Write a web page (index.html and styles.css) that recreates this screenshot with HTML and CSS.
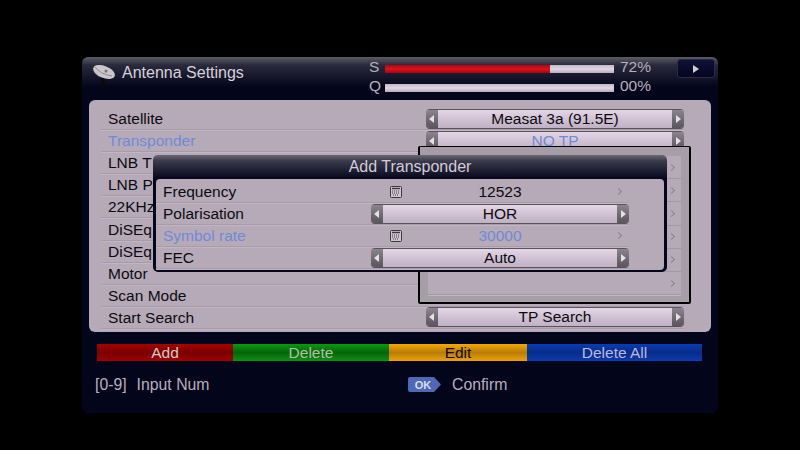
FILE: index.html
```html
<!DOCTYPE html>
<html lang="en">

<head>
    <meta charset="UTF-8">
    <title>Antenna Settings</title>
    <link rel="stylesheet" href="styles.css">
</head>

<body>
    <div class="window">
        <div class="header">
            <div class="title-box">
                <svg class="dish" width="26" height="26" viewBox="0 0 26 26">
                    <path d="M10 14 L12 22 M8 23 H15" stroke="#08080e" stroke-width="3" fill="none" />
                    <ellipse cx="12" cy="9" rx="11.5" ry="6" transform="rotate(22 12 9)" fill="#c9c5cb" />
                    <path d="M3 4 Q8 11 20 13" stroke="#8f8b93" stroke-width="1" fill="none" />
                    <circle cx="14" cy="8" r="1.5" fill="#77737c" />
                </svg>
                <span class="title">Antenna Settings</span>
            </div>
            <div class="signal">
                <div class="signal-row">
                    <span class="signal-label">S</span>
                    <div class="bar"><div class="bar-fill" style="width: 72%"></div></div>
                    <span class="signal-value">72%</span>
                </div>
                <div class="signal-row">
                    <span class="signal-label">Q</span>
                    <div class="bar"></div>
                    <span class="signal-value">00%</span>
                </div>
            </div>
            <div class="play-btn"><span class="play-arrow"></span></div>
        </div>

        <div class="panel">
            <div class="row"><span>Satellite</span>
                <div class="select"><i class="cap left"></i><b>Measat 3a (91.5E)</b><i class="cap right"></i></div>
            </div>
            <div class="row disabled"><span>Transponder</span>
                <div class="select"><i class="cap left"></i><b>NO TP</b><i class="cap right"></i></div>
            </div>
            <!-- only the part of these labels that shows beside the dialog -->
            <div class="row"><span>LNB T</span></div>
            <div class="row"><span>LNB P</span></div>
            <div class="row"><span>22KHz</span></div>
            <div class="row"><span>DiSEq</span></div>
            <div class="row"><span>DiSEq</span></div>
            <div class="row"><span>Motor</span></div>
            <div class="row"><span>Scan Mode</span></div>
            <div class="row"><span>Start Search</span>
                <div class="select"><i class="cap left"></i><b>TP Search</b><i class="cap right"></i></div>
            </div>

            <!-- dropdown behind the dialog -->
            <div class="dropdown">
                <div class="drop-item"><span class="chev"></span></div>
                <div class="drop-item"><span class="chev"></span></div>
                <div class="drop-item"><span class="chev"></span></div>
                <div class="drop-item"><span class="chev"></span></div>
                <div class="drop-item"><span class="chev"></span></div>
                <div class="drop-item"><span class="chev"></span></div>
            </div>

            <div class="dialog">
                <div class="dialog-title">Add Transponder</div>
                <div class="dialog-body">
                    <div class="drow"><span class="dlabel">Frequency</span>
                        <div class="dvalue">
                            <svg class="keypad" width="12" height="12" viewBox="0 0 12 12">
                                <rect x="0.5" y="0.5" width="11" height="11" rx="1" fill="#cfc4d0" stroke="#3c383e" />
                                <path d="M2 2.5 H10" stroke="#3c383e" stroke-width="1.4" />
                                <path d="M2 5 H10 M2 7 H10 M3 9 H9" stroke="#3c383e" stroke-dasharray="1 1" />
                            </svg>
                            <b>12523</b><span class="chev"></span>
                        </div>
                    </div>
                    <div class="drow"><span class="dlabel">Polarisation</span>
                        <div class="select"><i class="cap left"></i><b>HOR</b><i class="cap right"></i></div>
                    </div>
                    <div class="drow disabled"><span class="dlabel">Symbol rate</span>
                        <div class="dvalue">
                            <svg class="keypad" width="12" height="12" viewBox="0 0 12 12">
                                <rect x="0.5" y="0.5" width="11" height="11" rx="1" fill="#cfc4d0" stroke="#3c383e" />
                                <path d="M2 2.5 H10" stroke="#3c383e" stroke-width="1.4" />
                                <path d="M2 5 H10 M2 7 H10 M3 9 H9" stroke="#3c383e" stroke-dasharray="1 1" />
                            </svg>
                            <b>30000</b><span class="chev"></span>
                        </div>
                    </div>
                    <div class="drow"><span class="dlabel">FEC</span>
                        <div class="select"><i class="cap left"></i><b>Auto</b><i class="cap right"></i></div>
                    </div>
                </div>
            </div>
        </div>

        <div class="color-bar">
            <div class="key key-red">Add</div>
            <div class="key key-green">Delete</div>
            <div class="key key-yellow">Edit</div>
            <div class="key key-blue">Delete All</div>
        </div>

        <div class="help">
            <div class="help-left"><span>[0-9]</span><span>Input Num</span></div>
            <div class="help-right">
                <svg width="33" height="15" viewBox="0 0 33 15">
                    <path d="M2 0 H26 L33 7.5 L26 15 H2 Q0 15 0 13 V2 Q0 0 2 0 Z" fill="#4f68b4" />
                    <text x="15" y="11.5" text-anchor="middle" class="ok-text">OK</text>
                </svg>
                <span>Confirm</span>
            </div>
        </div>
    </div>
</body>

</html>
```

FILE: styles.css
```css
* {
    margin: 0;
    padding: 0;
    box-sizing: border-box;
}

body {
    background-color: #000;
    font-family: 'Liberation Sans', Arial, sans-serif;
    font-size: 15.5px;
    color: #0c0a10;
    width: 800px;
    height: 450px;
    overflow: hidden;
    padding: 57px 82px 0;
}

.window {
    width: 636px;
    height: 356px;
    background: linear-gradient(#5c5c68 0, #2a2a3c 8px, #03051a 30px);
    background-color: #02041a;
    border-radius: 6px;
    padding: 0 7px;
}

/* Header */
.header {
    display: flex;
    height: 43px;
    margin-right: -5px;
}

.title-box {
    flex: none;
    display: flex;
    align-items: center;
    gap: 4px;
    width: 280px;
    padding-left: 3px;
    height: 31px;
}

.dish {
    flex: none;
    margin-top: 6px;
}

.title {
    color: #d8d0dc;
    font-size: 16px;
}

.signal {
    flex: none;
    width: 308px;
    padding-top: 1px;
}

.signal-row {
    display: flex;
    align-items: flex-start;
    height: 19px;
    line-height: 18px;
    color: #b9aebd;
}

.signal-label {
    width: 16px;
}

.bar {
    width: 229px;
    height: 8px;
    margin-top: 7px;
    background: linear-gradient(#c3b7c6, #e2d6e4 50%, #b8acbb);
}

.bar-fill {
    height: 100%;
    background: linear-gradient(#a80810, #e0101c 50%, #a00810);
}

.signal-value {
    margin-left: 6px;
}

.play-btn {
    flex: none;
    width: 38px;
    height: 19px;
    margin-top: 2px;
    border: 1px solid #2a2c44;
    border-radius: 3px;
    background: linear-gradient(#0e1236, #03051f);
    display: flex;
    align-items: center;
    justify-content: center;
}

.play-arrow {
    border-left: 6px solid #d0ccd8;
    border-top: 4px solid transparent;
    border-bottom: 4px solid transparent;
}

/* Main panel */
.panel {
    position: relative;
    height: 232px;
    background-color: #b6aab8;
    border-radius: 6px;
    padding: 8px 27px 0 12px;
}

.row {
    display: flex;
    align-items: center;
    justify-content: space-between;
    height: 22.1px;
    border-bottom: 1px solid #a79ba9;
    box-shadow: 0 1px 0 #c2b6c4;
    padding-left: 7px;
}

.row > span {
    margin-top: 1px;
}

.disabled {
    color: #6f8bd8;
}

.select {
    display: flex;
    align-items: center;
    width: 258px;
    height: 20px;
    border-radius: 4px;
    background: linear-gradient(#e4d6e6, #cdbfd1 60%, #c0b2c4);
    border: 1px solid #58545a;
    border-width: 1px 0;
    overflow: hidden;
}

.select b {
    flex: 1;
    font-weight: normal;
    text-align: center;
}

.cap {
    display: block;
    position: relative;
    width: 12px;
    height: 100%;
    background: linear-gradient(#8a848c, #6c666e 60%, #5a565c);
}

.cap::after {
    content: "";
    position: absolute;
    top: 5px;
    border-top: 4px solid transparent;
    border-bottom: 4px solid transparent;
}

.cap.left::after {
    left: 3px;
    border-right: 5px solid #e4e0e6;
}

.cap.right::after {
    left: 4px;
    border-left: 5px solid #e4e0e6;
}

.chev {
    display: inline-block;
    width: 5px;
    height: 5px;
    border-top: 1px solid #8c8290;
    border-right: 1px solid #8c8290;
    transform: rotate(45deg);
}

/* Dropdown list under the dialog */
.dropdown {
    position: absolute;
    left: 329px;
    top: 46px;
    width: 273px;
    height: 158px;
    background-color: #a79da9;
    border: 1px solid #000;
    border-width: 1px 2px 2px 2px;
    border-radius: 2px;
    padding: 9px 8px 0;
}

.drop-item {
    height: 23.2px;
    background-color: #b6aab8;
    border-bottom: 1px solid #a297a4;
    box-shadow: 0 1px 0 #c2b6c4;
    display: flex;
    align-items: center;
    justify-content: flex-end;
    padding-right: 7px;
}

/* Add Transponder dialog */
.dialog {
    position: absolute;
    left: 64px;
    top: 55px;
    width: 514px;
    height: 117px;
    background: linear-gradient(#6a6874 0, #3a3a4a 6px, #05061c 24px);
    background-color: #02031a;
    border-radius: 5px;
    padding: 0 3px 2px;
}

.dialog-title {
    height: 24px;
    line-height: 24px;
    text-align: center;
    color: #d4ccd8;
    font-size: 16px;
}

.dialog-body {
    height: 91px;
    background-color: #b6aab8;
    border-radius: 4px;
    padding-top: 2px;
}

.drow {
    display: flex;
    align-items: center;
    height: 22px;
    padding-left: 7px;
    margin-right: 35px;
    border-bottom: 1px solid #a79ba9;
    box-shadow: 0 1px 0 #c2b6c4;
    justify-content: space-between;
}

.dvalue {
    display: flex;
    align-items: center;
    width: 258px;
    padding-right: 8px;
}

.dvalue b {
    font-weight: normal;
    flex: 1;
    text-align: center;
    padding-left: 13px;
}

.keypad {
    flex: none;
    margin-left: 19px;
    margin-right: -31px;
}

/* Colour keys */
.color-bar {
    display: flex;
    height: 17px;
    margin: 12px 8px 0;
    color: #d8c8cc;
}

.key {
    text-align: center;
    line-height: 18px;
}

.key-red {
    width: 136px;
    background: linear-gradient(#a80000, #780000 50%, #a00000);
}

.key-green {
    width: 156px;
    background: linear-gradient(#0b9a10, #076408 50%, #0a9410);
    color: #b0c0a8;
}

.key-yellow {
    width: 138px;
    background: linear-gradient(#f4a800, #b87c08 50%, #eca400);
    color: #100a00;
}

.key-blue {
    width: 175px;
    background: linear-gradient(#0a3cb4, #082c88 50%, #0a3cb4);
    color: #bcb8e0;
}

/* Bottom help */
.help {
    display: flex;
    align-items: center;
    margin-top: 15px;
    height: 17px;
    color: #b9aebd;
    font-size: 15.8px;
}

.help-left {
    display: flex;
    gap: 10px;
    width: 319px;
    padding-left: 6px;
}

.help-right {
    display: flex;
    align-items: center;
    gap: 11px;
}

.ok-text {
    font-family: 'Liberation Sans', Arial, sans-serif;
    font-size: 11px;
    font-weight: bold;
    fill: #d8dcec;
}
```
